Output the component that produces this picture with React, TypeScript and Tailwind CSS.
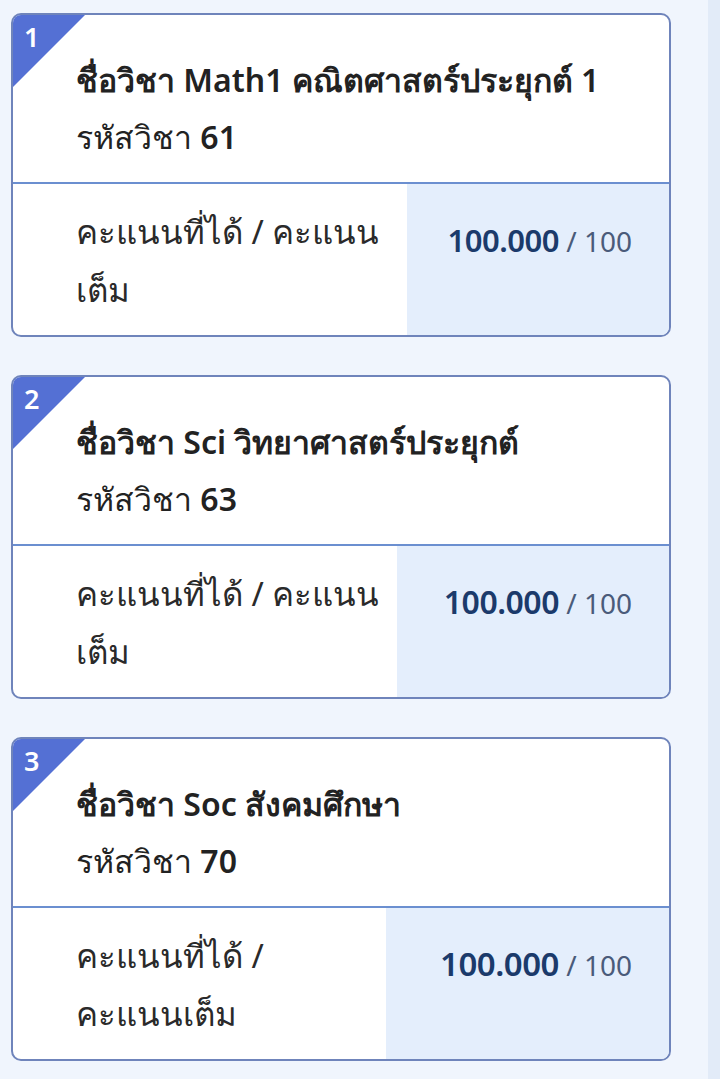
type Subject = {
    no: number;
    name: string;
    code: string;
    scoreLabel: string[];
    score: string;
    full: number;
    valueWidth: string;
    scoreSize: string;
};

const subjects: Subject[] = [
    {
        no: 1,
        name: 'ชื่อวิชา Math1 คณิตศาสตร์ประยุกต์ 1',
        code: '61',
        scoreLabel: ['คะแนนที่ได้ / คะแนน', 'เต็ม'],
        score: '100.000',
        full: 100,
        valueWidth: 'w-[262px]',
        scoreSize: 'text-[31px]',
    },
    {
        no: 2,
        name: 'ชื่อวิชา Sci วิทยาศาสตร์ประยุกต์',
        code: '63',
        scoreLabel: ['คะแนนที่ได้ / คะแนน', 'เต็ม'],
        score: '100.000',
        full: 100,
        valueWidth: 'w-[272px]',
        scoreSize: 'text-[32px]',
    },
    {
        no: 3,
        name: 'ชื่อวิชา Soc สังคมศึกษา',
        code: '70',
        scoreLabel: ['คะแนนที่ได้ /', 'คะแนนเต็ม'],
        score: '100.000',
        full: 100,
        valueWidth: 'w-[283px]',
        scoreSize: 'text-[33px]',
    },
];

function SubjectCard({ subject }: { subject: Subject }) {
    return (
        <div className="relative overflow-hidden rounded-[10px] border-2 border-[#6f84bb] bg-white">
            <div className="absolute left-0 top-0 h-[72px] w-[72px] bg-[#5470d4] [clip-path:polygon(0_0,100%_0,0_100%)]" />
            <span className="absolute left-[11px] top-[4px] text-[27px] font-semibold leading-[36px] text-white">
                {subject.no}
            </span>

            <div className="h-[167px] whitespace-nowrap pl-[63px] pt-[36px] text-[#222222]">
                <p className="text-[32px] font-semibold leading-[57px]">{subject.name}</p>
                <p className="text-[32px] leading-[57px]">
                    รหัสวิชา <span className="font-semibold">{subject.code}</span>
                </p>
            </div>

            <div className="flex border-t-2 border-[#6b8fd0]">
                <div className="flex-1 whitespace-nowrap pb-[16px] pl-[63px] pt-[19px] text-[33px] leading-[58px] text-[#2a2a2a]">
                    {subject.scoreLabel.map((line) => (
                        <span key={line} className="block">
                            {line}
                        </span>
                    ))}
                </div>
                <div
                    className={`${subject.valueWidth} whitespace-nowrap bg-[#e4eefc] pr-[37px] pt-[27px] text-right leading-[58px]`}
                >
                    <span className={`${subject.scoreSize} font-semibold tracking-[-0.5px] text-[#1b3a6b]`}>
                        {subject.score}
                    </span>
                    <span className="text-[28px] text-[#4a5b7a]"> / {subject.full}</span>
                </div>
            </div>
        </div>
    );
}

export default function App() {
    return (
        <div className="flex min-h-screen bg-[#f0f5fd] font-['Noto_Sans',sans-serif]">
            <div className="flex flex-1 flex-col gap-[38px] pl-[11px] pr-[37px] pt-[13px]">
                {subjects.map((subject) => (
                    <SubjectCard key={subject.no} subject={subject} />
                ))}
            </div>
            <div className="w-[12px] bg-[#e2ebf8]" />
        </div>
    );
}
